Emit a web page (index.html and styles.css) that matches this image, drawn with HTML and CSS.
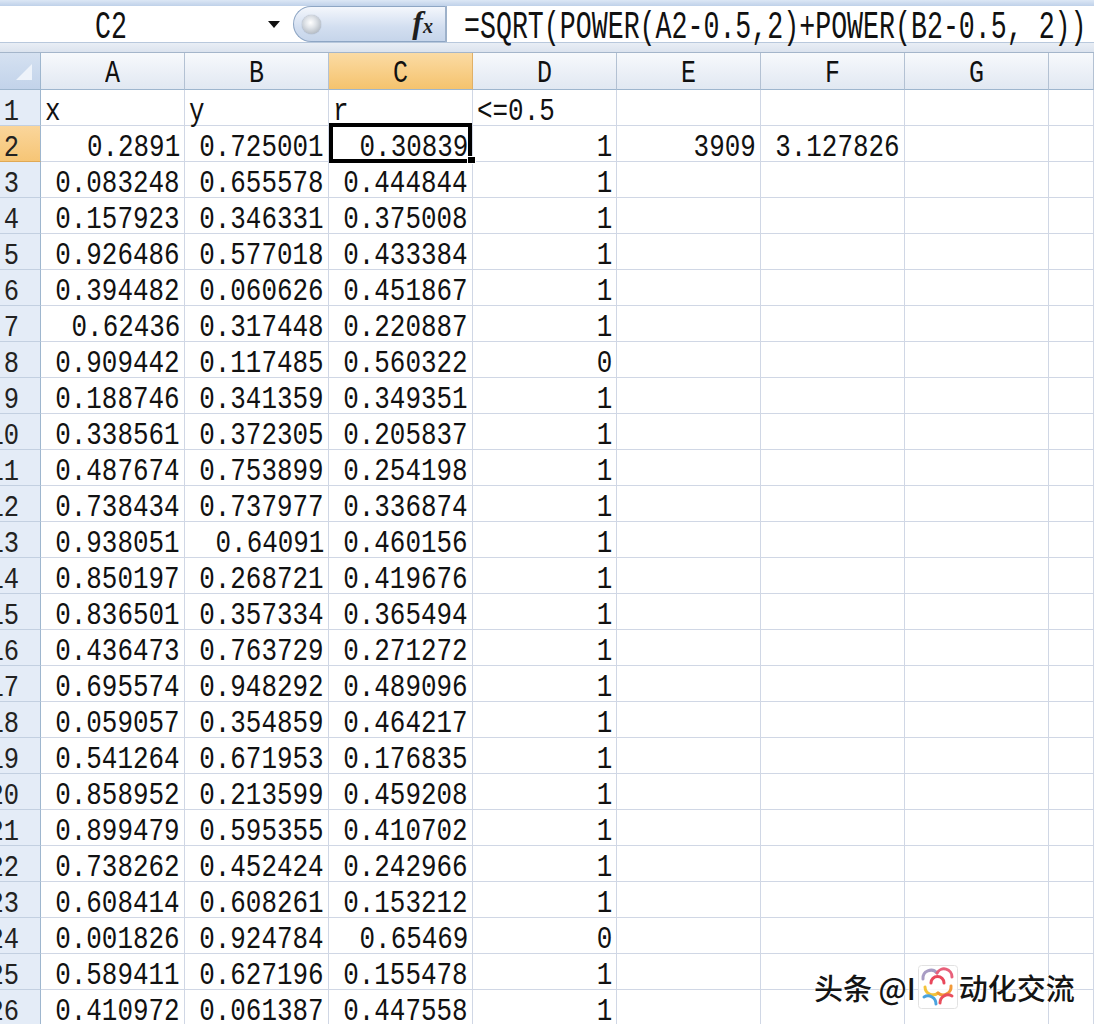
FILE: index.html
```html
<!DOCTYPE html>
<html lang="zh">
<head>
<meta charset="utf-8">
<title>Sheet</title>
<link rel="stylesheet" href="styles.css">
</head>
<body>
<div class="top">
  <div class="strip"></div>
  <div class="fbar">
    <div class="namebox"><span class="name">C2</span><span class="arrow"></span></div>
    <div class="fxbtn"><span class="knob"></span><span class="fx">f<span class="sub">x</span></span></div>
    <div class="formula"><span>=SQRT(POWER(A2-0.5,2)+POWER(B2-0.5, 2))</span></div>
  </div>
  <div class="band"></div>
</div>
<div class="sheet">
  <div class="corner"><span class="tri"></span></div>
  <div class="ch"><span>A</span></div><div class="ch"><span>B</span></div><div class="ch sel"><span>C</span></div><div class="ch"><span>D</span></div><div class="ch"><span>E</span></div><div class="ch"><span>F</span></div><div class="ch"><span>G</span></div><div class="ch"></div>

  <div class="rh"><span>1</span></div><div class="c t"><span>x</span></div><div class="c t"><span>y</span></div><div class="c t"><span>r</span></div><div class="c t"><span>&lt;=0.5</span></div><div class="c"></div><div class="c"></div><div class="c"></div><div class="c"></div>
  <div class="rh sel"><span>2</span></div><div class="c"><span>0.2891</span></div><div class="c"><span>0.725001</span></div><div class="c cur"><span>0.30839</span><div class="selbox"></div><div class="handle"></div></div><div class="c"><span>1</span></div><div class="c"><span>3909</span></div><div class="c"><span>3.127826</span></div><div class="c"></div><div class="c"></div>
  <div class="rh"><span>3</span></div><div class="c"><span>0.083248</span></div><div class="c"><span>0.655578</span></div><div class="c"><span>0.444844</span></div><div class="c"><span>1</span></div><div class="c"></div><div class="c"></div><div class="c"></div><div class="c"></div>
  <div class="rh"><span>4</span></div><div class="c"><span>0.157923</span></div><div class="c"><span>0.346331</span></div><div class="c"><span>0.375008</span></div><div class="c"><span>1</span></div><div class="c"></div><div class="c"></div><div class="c"></div><div class="c"></div>
  <div class="rh"><span>5</span></div><div class="c"><span>0.926486</span></div><div class="c"><span>0.577018</span></div><div class="c"><span>0.433384</span></div><div class="c"><span>1</span></div><div class="c"></div><div class="c"></div><div class="c"></div><div class="c"></div>
  <div class="rh"><span>6</span></div><div class="c"><span>0.394482</span></div><div class="c"><span>0.060626</span></div><div class="c"><span>0.451867</span></div><div class="c"><span>1</span></div><div class="c"></div><div class="c"></div><div class="c"></div><div class="c"></div>
  <div class="rh"><span>7</span></div><div class="c"><span>0.62436</span></div><div class="c"><span>0.317448</span></div><div class="c"><span>0.220887</span></div><div class="c"><span>1</span></div><div class="c"></div><div class="c"></div><div class="c"></div><div class="c"></div>
  <div class="rh"><span>8</span></div><div class="c"><span>0.909442</span></div><div class="c"><span>0.117485</span></div><div class="c"><span>0.560322</span></div><div class="c"><span>0</span></div><div class="c"></div><div class="c"></div><div class="c"></div><div class="c"></div>
  <div class="rh"><span>9</span></div><div class="c"><span>0.188746</span></div><div class="c"><span>0.341359</span></div><div class="c"><span>0.349351</span></div><div class="c"><span>1</span></div><div class="c"></div><div class="c"></div><div class="c"></div><div class="c"></div>
  <div class="rh"><span>10</span></div><div class="c"><span>0.338561</span></div><div class="c"><span>0.372305</span></div><div class="c"><span>0.205837</span></div><div class="c"><span>1</span></div><div class="c"></div><div class="c"></div><div class="c"></div><div class="c"></div>
  <div class="rh"><span>11</span></div><div class="c"><span>0.487674</span></div><div class="c"><span>0.753899</span></div><div class="c"><span>0.254198</span></div><div class="c"><span>1</span></div><div class="c"></div><div class="c"></div><div class="c"></div><div class="c"></div>
  <div class="rh"><span>12</span></div><div class="c"><span>0.738434</span></div><div class="c"><span>0.737977</span></div><div class="c"><span>0.336874</span></div><div class="c"><span>1</span></div><div class="c"></div><div class="c"></div><div class="c"></div><div class="c"></div>
  <div class="rh"><span>13</span></div><div class="c"><span>0.938051</span></div><div class="c"><span>0.64091</span></div><div class="c"><span>0.460156</span></div><div class="c"><span>1</span></div><div class="c"></div><div class="c"></div><div class="c"></div><div class="c"></div>
  <div class="rh"><span>14</span></div><div class="c"><span>0.850197</span></div><div class="c"><span>0.268721</span></div><div class="c"><span>0.419676</span></div><div class="c"><span>1</span></div><div class="c"></div><div class="c"></div><div class="c"></div><div class="c"></div>
  <div class="rh"><span>15</span></div><div class="c"><span>0.836501</span></div><div class="c"><span>0.357334</span></div><div class="c"><span>0.365494</span></div><div class="c"><span>1</span></div><div class="c"></div><div class="c"></div><div class="c"></div><div class="c"></div>
  <div class="rh"><span>16</span></div><div class="c"><span>0.436473</span></div><div class="c"><span>0.763729</span></div><div class="c"><span>0.271272</span></div><div class="c"><span>1</span></div><div class="c"></div><div class="c"></div><div class="c"></div><div class="c"></div>
  <div class="rh"><span>17</span></div><div class="c"><span>0.695574</span></div><div class="c"><span>0.948292</span></div><div class="c"><span>0.489096</span></div><div class="c"><span>1</span></div><div class="c"></div><div class="c"></div><div class="c"></div><div class="c"></div>
  <div class="rh"><span>18</span></div><div class="c"><span>0.059057</span></div><div class="c"><span>0.354859</span></div><div class="c"><span>0.464217</span></div><div class="c"><span>1</span></div><div class="c"></div><div class="c"></div><div class="c"></div><div class="c"></div>
  <div class="rh"><span>19</span></div><div class="c"><span>0.541264</span></div><div class="c"><span>0.671953</span></div><div class="c"><span>0.176835</span></div><div class="c"><span>1</span></div><div class="c"></div><div class="c"></div><div class="c"></div><div class="c"></div>
  <div class="rh"><span>20</span></div><div class="c"><span>0.858952</span></div><div class="c"><span>0.213599</span></div><div class="c"><span>0.459208</span></div><div class="c"><span>1</span></div><div class="c"></div><div class="c"></div><div class="c"></div><div class="c"></div>
  <div class="rh"><span>21</span></div><div class="c"><span>0.899479</span></div><div class="c"><span>0.595355</span></div><div class="c"><span>0.410702</span></div><div class="c"><span>1</span></div><div class="c"></div><div class="c"></div><div class="c"></div><div class="c"></div>
  <div class="rh"><span>22</span></div><div class="c"><span>0.738262</span></div><div class="c"><span>0.452424</span></div><div class="c"><span>0.242966</span></div><div class="c"><span>1</span></div><div class="c"></div><div class="c"></div><div class="c"></div><div class="c"></div>
  <div class="rh"><span>23</span></div><div class="c"><span>0.608414</span></div><div class="c"><span>0.608261</span></div><div class="c"><span>0.153212</span></div><div class="c"><span>1</span></div><div class="c"></div><div class="c"></div><div class="c"></div><div class="c"></div>
  <div class="rh"><span>24</span></div><div class="c"><span>0.001826</span></div><div class="c"><span>0.924784</span></div><div class="c"><span>0.65469</span></div><div class="c"><span>0</span></div><div class="c"></div><div class="c"></div><div class="c"></div><div class="c"></div>
  <div class="rh"><span>25</span></div><div class="c"><span>0.589411</span></div><div class="c"><span>0.627196</span></div><div class="c"><span>0.155478</span></div><div class="c"><span>1</span></div><div class="c"></div><div class="c"></div><div class="c"></div><div class="c"></div>
  <div class="rh"><span>26</span></div><div class="c"><span>0.410972</span></div><div class="c"><span>0.061387</span></div><div class="c"><span>0.447558</span></div><div class="c"><span>1</span></div><div class="c"></div><div class="c"></div><div class="c"></div><div class="c"></div>
</div>
<div class="wm">
  <span>头条 @I</span>
  <svg class="logo" width="40" height="44" viewBox="0 0 40 44">
    <rect x="0.5" y="0.5" width="39" height="43" rx="3" fill="#ffffff" fill-opacity="0.85" stroke="#e2e2e2"/>
    <g fill="none" stroke-width="3" stroke-linecap="round">
      <path d="M5 14 A8 8 0 0 1 19 8" stroke="#a89cc4"/>
      <path d="M19 8 A8 8 0 0 1 34 12" stroke="#e8607a"/>
      <path d="M13 18 A6 6 0 0 1 26 18" stroke="#e9485c"/>
      <path d="M7 22 A8 8 0 0 0 20 28" stroke="#f3c33b"/>
      <path d="M20 28 A8 8 0 0 0 33 21" stroke="#f29a38"/>
      <path d="M6 32 A8 8 0 0 1 18 39" stroke="#4aa3df"/>
      <path d="M22 38 A8 8 0 0 1 34 31" stroke="#e94e5d"/>
    </g>
  </svg>
  <span>动化交流</span>
</div>
</body>
</html>
```
FILE: styles.css
```css
* { box-sizing: border-box; margin: 0; padding: 0; }
html, body { background: #ffffff; }
body {
  width: 1094px;
  height: 1024px;
  overflow: hidden;
  position: relative;
  font-family: "Liberation Mono", "DejaVu Sans Mono", monospace;
  color: #111111;
}

/* ---------- formula bar ---------- */
.top { height: 53px; display: flex; flex-direction: column; }
.strip { height: 6px; background: linear-gradient(#dce7f5, #bfd1e9); }
.fbar {
  height: 37px;
  display: flex;
  background: #ffffff;
  border-bottom: 1px solid #b8c8dc;
}
.namebox {
  width: 287px;
  display: flex;
  align-items: center;
  padding-left: 95px;
  padding-right: 7px;
}
.name {
  display: inline-block;
  font-size: 38px;
  line-height: 44px;
  margin-top: 8px;
  transform: scaleX(0.7);
  transform-origin: left center;
}
.arrow {
  margin-left: auto;
  width: 0; height: 0;
  border-left: 6px solid transparent;
  border-right: 6px solid transparent;
  border-top: 7px solid #111;
}
.fxbtn {
  margin-left: 6px;
  width: 152px;
  display: flex;
  align-items: center;
  background: linear-gradient(#f4f7fc, #d2def0 60%, #c6d5ea);
  border: 1px solid #8ea6c4;
  border-right: none;
  border-radius: 18px 0 0 18px;
}
.knob {
  margin-left: 8px;
  width: 19px; height: 19px;
  border-radius: 50%;
  background: radial-gradient(circle at 45% 40%, #ffffff 0, #dfe3e8 35%, #9aa3ae 100%);
  box-shadow: 0 0 1px #6f7a88;
}
.fx {
  margin-left: auto;
  margin-right: 12px;
  font-family: "Liberation Serif", serif;
  font-style: italic;
  font-weight: bold;
  font-size: 32px;
  line-height: 34px;
  color: #1e1e1e;
}
.fx .sub { font-size: 20px; }
.formula {
  flex: 1;
  border-left: 2px solid #9db1ca;
  display: flex;
  align-items: center;
  padding-left: 17px;
  white-space: nowrap;
  min-width: 0;
}
.formula span {
  display: inline-block;
  font-size: 38px;
  line-height: 44px;
  margin-top: 7px;
  transform: scaleX(0.7);
  transform-origin: left center;
}
.band {
  flex: 1;
  background: linear-gradient(#e9eef5, #dbe3ee);
  border-bottom: 1px solid #a4b5ca;
}

/* ---------- grid ---------- */
.sheet {
  display: grid;
  grid-template-columns: 41px repeat(7, 144px) 45px;
  grid-template-rows: 37px;
  grid-auto-rows: 36px;
}
.corner {
  background: linear-gradient(#d5e1f1, #c2d3ea);
  border-right: 1px solid #9eb6ce;
  border-bottom: 1px solid #9eb6ce;
  display: flex;
  justify-content: flex-end;
  align-items: flex-end;
  padding: 0 8px 9px 0;
}
.tri {
  width: 16px; height: 16px;
  background: #eef3fa;
  clip-path: polygon(100% 0, 100% 100%, 0 100%);
}
.ch {
  background: linear-gradient(#f7f9fc, #e1e8f2);
  border-right: 1px solid #b3c1d3;
  border-bottom: 1px solid #9eb6ce;
  display: flex;
  justify-content: center;
  align-items: flex-end;
  padding-bottom: 2px;
  font-size: 32px;
}
.ch span {
  display: inline-block;
  line-height: 26px;
  transform: scaleX(0.78);
  transform-origin: center bottom;
}
.ch.sel { background: linear-gradient(#fbdba4, #f5c36e); border-right-color: #e0b067; }
.rh {
  background: #e4ecf7;
  border-right: 1px solid #9eb6ce;
  border-bottom: 1px solid #c3d0e1;
  display: flex;
  justify-content: flex-end;
  align-items: flex-end;
  padding-right: 21px;
  font-size: 30px;
  color: #222;
}
.rh span {
  display: inline-block;
  line-height: 26px;
  transform: scaleX(0.85);
  transform-origin: right bottom;
  white-space: nowrap;
}
.rh.sel { background: linear-gradient(#fad69b, #f6c576); border-bottom-color: #e0a955; }

.c {
  border-right: 1px solid #d0d7e5;
  border-bottom: 1px solid #d0d7e5;
  display: flex;
  justify-content: flex-end;
  align-items: flex-end;
  padding: 0 4px;
  font-size: 32px;
  white-space: nowrap;
}
.c span {
  display: inline-block;
  line-height: 26px;
  transform: scaleX(0.81);
  transform-origin: right bottom;
}
.c.t { justify-content: flex-start; }
.c.t span { transform-origin: left bottom; }

.cur { position: relative; }
.selbox {
  position: absolute;
  left: 0; top: -3px; right: 0; bottom: -2px;
  border: 4px solid #000;
}
.handle {
  position: absolute;
  right: -4px; bottom: -3px;
  width: 9px; height: 8px;
  background: #000;
  border: 1px solid #fff;
}

/* ---------- watermark ---------- */
.wm {
  position: absolute;
  left: 814px;
  top: 965px;
  display: flex;
  align-items: center;
  font-family: "Noto Sans CJK SC", sans-serif;
  font-size: 29px;
  font-weight: 500;
  line-height: 42px;
  color: #141414;
  text-shadow: 0 0 2px #fff, 0 0 2px #fff, 0 0 1px #fff;
  white-space: pre;
}
.logo { margin: 0 1px 0 2px; }
```
